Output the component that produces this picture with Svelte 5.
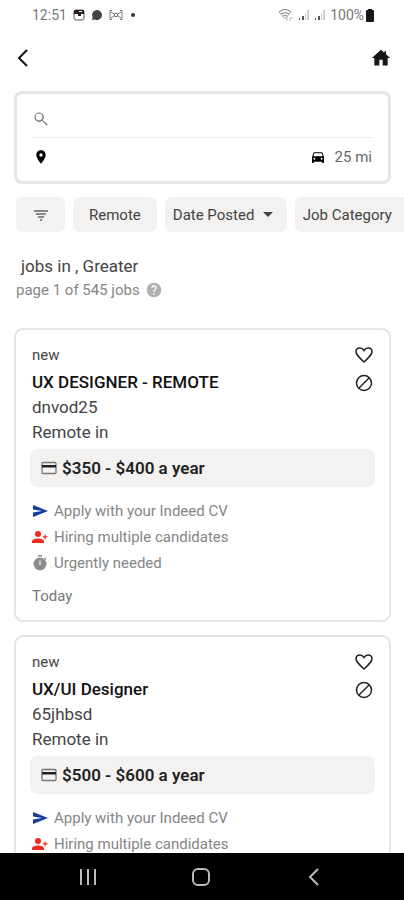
<script lang="ts">
	type Job = { title: string; company: string; location: string; pay: string; posted: string };

	const jobs: Job[] = [
		{
			title: 'UX DESIGNER - REMOTE',
			company: 'dnvod25',
			location: 'Remote in',
			pay: '$350 - $400 a year',
			posted: 'Today'
		},
		{
			title: 'UX/UI Designer',
			company: '65jhbsd',
			location: 'Remote in',
			pay: '$500 - $600 a year',
			posted: 'Today'
		}
	];

	let what = $state('');
	let where = $state('');
</script>

<div class="screen">
	<div class="status">
		<div class="status-side">
			<span>12:51</span>
			<svg class="status-icon" viewBox="0 0 12 12">
				<rect x="1" y="1" width="10" height="10" rx="2" fill="#fff" stroke="#555" />
				<path d="M1 1h10v4H8v2H5V5H1z" fill="#222" />
				<path d="M6 2h3v1H6z" fill="#fff" />
			</svg>
			<svg class="status-icon" viewBox="0 0 12 12">
				<path d="M6 1a5 5 0 1 1-2.2 9.5L1 11l.7-2.6A5 5 0 0 1 6 1z" fill="#444" />
			</svg>
			<svg class="status-icon wide" viewBox="0 0 14 12">
				<path
					d="M3 1.500H1v9h2M11 1.500h2v9h-2M2 3l3 2M2 9l3-2M12 3L9 5M12 9L9 7"
					fill="none"
					stroke="#777"
				/>
				<circle cx="7" cy="6" r="1.7" fill="none" stroke="#666" />
			</svg>
			<span class="dot"></span>
		</div>
		<div class="status-side right">
			<svg class="wifi" viewBox="0 0 16 14">
				<path d="M1 4q6-5 12 0M3 6q4-3 8 0M5 8q2-1 4 0" fill="none" stroke="#777" />
				<path d="M1 4l6 7 6-7" fill="none" stroke="#aaa" />
				<path d="M9 9v4M12 13V9M14 9v2" stroke="#bbb" />
			</svg>
			{#each [0, 1] as sim (sim)}
				<svg class="signal" viewBox="0 0 12 12">
					<path d="M1 9h1v2H1zM4 7h2v4H4z" fill="#555" />
					<path d="M7 4h1v7H7zM9 1h2v10H9z" fill="#ccc" />
				</svg>
			{/each}
			<div class="charge">
				<span>100%</span>
				<svg class="battery" viewBox="0 0 8 13">
					<path d="M2 0h4v1h1q1 0 1 1v10q0 1-1 1H1q-1 0-1-1V2q0-1 1-1h1z" fill="#161616" />
				</svg>
			</div>
		</div>
	</div>

	<header>
		<button class="icon-button" aria-label="Back">
			<svg viewBox="0 0 20 20">
				<path d="M13 2L5 10l8 8" fill="none" stroke="#111" stroke-width="2" />
			</svg>
		</button>
		<a class="icon-button" href="#home" aria-label="Home">
			<svg class="home" viewBox="0 0 24 24">
				<path d="M10 21v-7h4v7h6v-9h3L18 7.5V4h-2v1.8L12 2 1 12h3v9z" fill="#161616" />
			</svg>
		</a>
	</header>

	<main>
		<form class="search">
			<label class="field">
				<svg viewBox="0 0 24 24" fill="#666">
					<path
						d="M15.500 14.500 14.430 13.730A6.900 6.900 0 1 0 13.730 14.430L14.500 15.500 20.500 21.700 22 20.200zM9 14.300a5.200 5.200 0 1 1 0-10.400 5.200 5.200 0 0 1 0 10.400z"
					/>
				</svg>
				<input type="text" aria-label="Job title" bind:value={what} />
			</label>
			<div class="location">
				<label class="field">
					<svg viewBox="0 0 24 24">
						<path
							d="M12 2C8.13 2 5 5.13 5 9c0 5.25 7 13 7 13s7-7.75 7-13c0-3.87-3.13-7-7-7zm0 9.5a2.5 2.5 0 1 1 0-5 2.5 2.5 0 0 1 0 5z"
						/>
					</svg>
					<input type="text" aria-label="Location" bind:value={where} />
				</label>
				<button type="button" class="radius">
					<svg viewBox="0 0 24 24">
						<path
							d="M18.92 6.01C18.72 5.42 18.16 5 17.5 5h-11c-.66 0-1.21.42-1.42 1.01L3 12v8c0 .55.45 1 1 1h1c.55 0 1-.45 1-1v-1h12v1c0 .55.45 1 1 1h1c.55 0 1-.45 1-1v-8l-2.08-5.99zM6.5 16a1.5 1.5 0 1 1 0-3 1.5 1.5 0 0 1 0 3zm11 0a1.5 1.5 0 1 1 0-3 1.5 1.5 0 0 1 0 3zM5 11l1.5-4.5h11L19 11H5z"
						/>
					</svg>
					25 mi
				</button>
			</div>
		</form>

		<div class="filters">
			<button class="chip filter" aria-label="Filters">
				<svg viewBox="0 0 16 16">
					<path d="M1 4h14M3 7h10M5 10h6M7 13h2" stroke="#888" stroke-width="1.8" />
				</svg>
			</button>
			<button class="chip remote">Remote</button>
			<div class="chip dropdown">
				<select aria-label="Date Posted"><option>Date Posted</option></select>
				<svg class="caret" viewBox="0 0 10 5"><path d="M0 0h10L5 5z" fill="#444" /></svg>
			</div>
			<div class="chip dropdown category">
				<select aria-label="Job Category"><option>Job Category</option></select>
				<svg class="caret" viewBox="0 0 10 5"><path d="M0 0h10L5 5z" fill="#444" /></svg>
			</div>
		</div>

		<div class="summary">
			<h1>jobs in , Greater</h1>
			<p>
				page 1 of 545 jobs
				<svg viewBox="0 0 24 24" fill="#b0b0b0">
					<path
						d="M12 1a11 11 0 1 0 0 22 11 11 0 0 0 0-22zm1 18h-2v-2h2v2zm2.07-7.75l-.9.92C13.45 12.9 13 13.5 13 15h-2v-.5c0-1.1.45-2.1 1.17-2.83l1.24-1.26c.37-.36.59-.86.59-1.41a2 2 0 1 0-4 0H8a4 4 0 1 1 8 0c0 .88-.36 1.68-.93 2.25z"
					/>
				</svg>
			</p>
		</div>

		{#each jobs as job (job.company)}
			<article class="card">
				<div class="top">
					<div class="details">
						<span class="new">new</span>
						<h2>{job.title}</h2>
						<p>{job.company}</p>
						<p>{job.location}</p>
					</div>
					<div class="actions">
						<button aria-label="Save job">
							<svg viewBox="0 0 18 18" fill="none" stroke="#222" stroke-width="1.5">
								<path
									d="M9 16C3 10.500 1 8.500 1 5.800 1 3.500 2.700 2 4.900 2 6.600 2 8 3 9 4.500 10 3 11.400 2 13.100 2 15.300 2 17 3.500 17 5.800 17 8.500 15 10.500 9 16z"
								/>
							</svg>
						</button>
						<button aria-label="Not interested">
							<svg viewBox="0 0 18 18" fill="none" stroke="#222" stroke-width="1.5">
								<circle cx="9" cy="9" r="7.500" />
								<path d="M14 4L4 14" />
							</svg>
						</button>
					</div>
				</div>
				<div class="pay">
					<svg viewBox="0 0 16 14">
						<rect x="1" y="1.500" width="14" height="11" rx="1" fill="none" stroke="#777" stroke-width="1.300" />
						<path d="M1 4h14v2.500H1z" fill="#222" />
					</svg>
					{job.pay}
				</div>
				<ul>
					<li>
						<svg viewBox="0 0 16 16" fill="#173a9e"><path d="M1 2l15 6L1 14V9.500L10 8 1 6.500z" /></svg>
						Apply with your Indeed CV
					</li>
					<li>
						<svg viewBox="0 0 16 16" fill="#f02a20">
							<circle cx="6" cy="5" r="3" />
							<path d="M0 14v-1.500C0 10.500 3 9.500 6 9.500s6 1 6 3V14z" />
							<path d="M12.500 5.500h1.200v1.800h1.800v1.200h-1.800v1.800h-1.200V8.500h-1.800V7.300h1.800z" />
						</svg>
						Hiring multiple candidates
					</li>
					<li>
						<svg viewBox="0 0 16 16" fill="#8c8c8c">
							<path d="M6 0h4v1.500H6zM13 2.500l1.500 1.500-1 1L12 3.500z" />
							<circle cx="8" cy="9" r="6.500" />
							<path d="M7 5.500h2v4.500H7z" fill="#ccc" />
						</svg>
						Urgently needed
					</li>
				</ul>
				<p class="posted">{job.posted}</p>
			</article>
		{/each}
	</main>

	<nav>
		<button aria-label="Recent apps">
			<svg viewBox="0 0 20 20"><path d="M3 2v16M10 2v16M17 2v16" /></svg>
		</button>
		<button aria-label="Home screen">
			<svg viewBox="0 0 20 20"><rect x="2" y="2" width="16" height="16" rx="5" /></svg>
		</button>
		<button aria-label="Go back">
			<svg viewBox="0 0 20 20"><path d="M14 2l-8 8 8 8" /></svg>
		</button>
	</nav>
</div>

<style>
	:global(body) {
		margin: 0;
		background: #fff;
	}
	.screen {
		display: flex;
		flex-direction: column;
		height: 100vh;
		overflow: hidden;
		font-family: Roboto, 'Liberation Sans', sans-serif;
		font-size: 15px;
		color: #444;
	}
	.screen * {
		box-sizing: border-box;
	}
	svg {
		display: block;
		flex: none;
		width: 16px;
		height: 16px;
	}
	h1,
	h2,
	p,
	ul {
		margin: 0;
		padding: 0;
	}
	button,
	input,
	select {
		border: none;
		padding: 0;
		background: none;
		font: inherit;
		color: inherit;
	}
	.status {
		display: flex;
		justify-content: space-between;
		flex: none;
		padding: 0 30px 0 32px;
		font-size: 14px;
		line-height: 30px;
		color: #777;
	}
	.status-side {
		display: flex;
		align-items: center;
		gap: 6px;
	}
	.status-side.right {
		gap: 4px;
	}
	.status-icon {
		width: 12px;
		height: 12px;
	}
	.status-icon.wide {
		width: 14px;
	}
	.dot {
		width: 4px;
		height: 4px;
		margin-left: 2px;
		border-radius: 50%;
		background: #333;
	}
	.wifi {
		height: 14px;
	}
	.signal {
		width: 12px;
		height: 12px;
	}
	.charge {
		display: flex;
		align-items: center;
		gap: 2px;
	}
	.battery {
		width: 8px;
		height: 13px;
	}
	header {
		display: flex;
		justify-content: space-between;
		align-items: center;
		flex: none;
		height: 55px;
		padding: 0 12px 0 14px;
	}
	.icon-button svg {
		width: 20px;
		height: 20px;
	}
	.icon-button .home {
		width: 22px;
	}
	main {
		flex: 1;
		min-height: 0;
		overflow: hidden;
		padding: 6px 13px 0 14px;
	}
	.search {
		padding: 6px 16px;
		border: 3px solid #e6e6e6;
		border-radius: 8px;
	}
	.field {
		display: flex;
		align-items: center;
		flex: 1;
		min-width: 0;
		height: 37px;
	}
	.field input {
		flex: 1;
		min-width: 0;
		margin-left: 8px;
		outline: none;
	}
	.location {
		display: flex;
		border-top: 1px solid #ececec;
	}
	.radius {
		display: flex;
		align-items: center;
		gap: 9px;
		color: #666;
	}
	.filters {
		display: flex;
		gap: 8px;
		margin: 13px -13px 0 2px;
		overflow: hidden;
	}
	.chip {
		display: flex;
		align-items: center;
		justify-content: center;
		flex: none;
		height: 35px;
		border-radius: 7px;
		background: #f3f2f1;
	}
	.filter {
		width: 49px;
	}
	.remote {
		padding: 0 16px;
	}
	.dropdown {
		padding: 0 14px 0 8px;
		gap: 8px;
	}
	.category {
		gap: 14px;
	}
	.dropdown select {
		appearance: none;
	}
	.caret {
		width: 10px;
		height: 5px;
	}
	.summary {
		margin: 22px 2px 26px;
	}
	h1 {
		padding-left: 5px;
		font-size: 17px;
		font-weight: 400;
		line-height: 24px;
	}
	.summary p {
		display: flex;
		align-items: center;
		gap: 6px;
		line-height: 24px;
		color: #858585;
	}
	.card {
		margin-bottom: 13px;
		padding: 13px 14px 12px;
		border: 2px solid #e4e4e4;
		border-radius: 9px;
	}
	.top {
		display: flex;
		justify-content: space-between;
		padding: 0 2px;
		line-height: 25px;
	}
	.details {
		font-size: 17px;
	}
	.new {
		display: block;
		margin-bottom: 2px;
		font-size: 15px;
	}
	h2 {
		font-size: 17px;
		font-weight: 500;
		color: #111;
	}
	.actions {
		display: flex;
		flex-direction: column;
		gap: 10px;
		padding-top: 3px;
	}
	.actions svg {
		width: 18px;
		height: 18px;
	}
	.pay {
		display: flex;
		align-items: center;
		gap: 5px;
		height: 38px;
		margin-top: 4px;
		padding: 0 11px;
		border-radius: 7px;
		background: #f3f2f1;
		font-size: 17px;
		font-weight: 600;
		color: #222;
	}
	ul {
		list-style: none;
		margin-top: 11px;
		padding: 0 2px;
	}
	li {
		display: flex;
		align-items: center;
		gap: 6px;
		line-height: 26px;
		color: #858585;
	}
	.posted {
		margin-top: 8px;
		padding: 0 2px;
		line-height: 24px;
		color: #777;
	}
	nav {
		display: flex;
		justify-content: center;
		align-items: center;
		gap: 93px;
		flex: none;
		height: 47px;
		padding-right: 2px;
		background: #000;
	}
	nav svg {
		width: 20px;
		height: 20px;
		fill: none;
		stroke: #bbb;
		stroke-width: 2;
	}
</style>
